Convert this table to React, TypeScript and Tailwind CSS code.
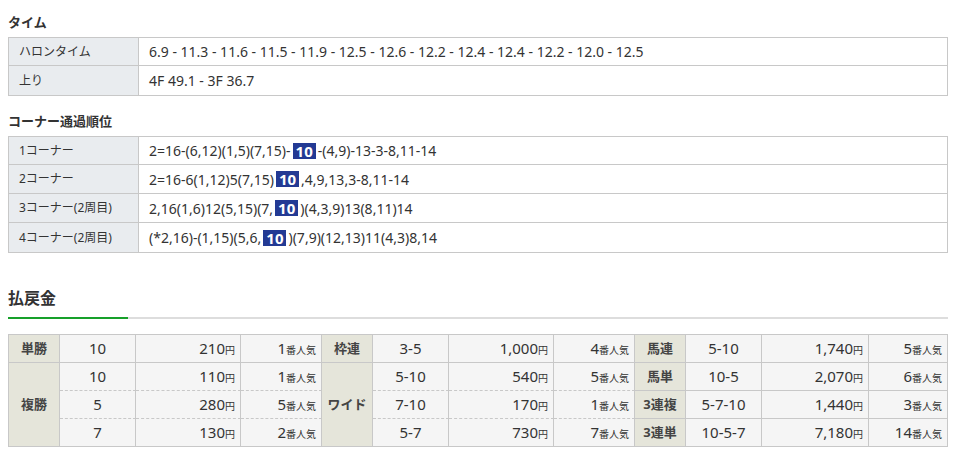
import React from 'react';

type Pay = { label: string; rows: { horse: string; yen: string; rank: string }[] };

const timeRows = [
  { label: 'ハロンタイム', value: '6.9 - 11.3 - 11.6 - 11.5 - 11.9 - 12.5 - 12.6 - 12.2 - 12.4 - 12.4 - 12.2 - 12.0 - 12.5' },
  { label: '上り', value: '4F 49.1 - 3F 36.7' },
];

const Hl = () => (
  <span className="inline-block bg-[#233a94] text-white font-bold text-[15px] leading-[16px] px-[3px] mx-[2px] align-[-1px]">10</span>
);

const cornerRows: { label: string; value: React.ReactNode }[] = [
  { label: '1コーナー', value: <>2=16-(6,12)(1,5)(7,15)-<Hl />-(4,9)-13-3-8,11-14</> },
  { label: '2コーナー', value: <>2=16-6(1,12)5(7,15) <Hl />,4,9,13,3-8,11-14</> },
  { label: '3コーナー(2周目)', value: <>2,16(1,6)12(5,15)(7,<Hl />)(4,3,9)13(8,11)14</> },
  { label: '4コーナー(2周目)', value: <>(*2,16)-(1,15)(5,6,<Hl />)(7,9)(12,13)11(4,3)8,14</> },
];

const payTables: { cols: string; groups: Pay[] }[] = [
  {
    cols: 'grid-cols-[51px_76px_105px_81px]',
    groups: [
      { label: '単勝', rows: [{ horse: '10', yen: '210', rank: '1' }] },
      {
        label: '複勝',
        rows: [
          { horse: '10', yen: '110', rank: '1' },
          { horse: '5', yen: '280', rank: '5' },
          { horse: '7', yen: '130', rank: '2' },
        ],
      },
    ],
  },
  {
    cols: 'grid-cols-[51px_76px_105px_81px]',
    groups: [
      { label: '枠連', rows: [{ horse: '3-5', yen: '1,000', rank: '4' }] },
      {
        label: 'ワイド',
        rows: [
          { horse: '5-10', yen: '540', rank: '5' },
          { horse: '7-10', yen: '170', rank: '1' },
          { horse: '5-7', yen: '730', rank: '7' },
        ],
      },
    ],
  },
  {
    cols: 'grid-cols-[51px_76px_107px_79px]',
    groups: [
      { label: '馬連', rows: [{ horse: '5-10', yen: '1,740', rank: '5' }] },
      { label: '馬単', rows: [{ horse: '10-5', yen: '2,070', rank: '6' }] },
      { label: '3連複', rows: [{ horse: '5-7-10', yen: '1,440', rank: '3' }] },
      { label: '3連単', rows: [{ horse: '10-5-7', yen: '7,180', rank: '14' }] },
    ],
  },
];

const InfoTable = ({ rows }: { rows: { label: string; value: React.ReactNode }[] }) => (
  <div className="border border-[#c8c8c8] divide-y divide-[#c8c8c8]">
    {rows.map((r) => (
      <div key={r.label} className="flex h-[29px] first:h-[28px]">
        <div className="w-[130px] shrink-0 border-r border-[#c8c8c8] bg-[#e9ecef] pl-[10px] flex items-center text-[12px]">
          {r.label}
        </div>
        <div className="flex-1 pl-[10px] flex items-center text-[14px] whitespace-nowrap">{r.value}</div>
      </div>
    ))}
  </div>
);

const PayTable = ({ cols, groups }: { cols: string; groups: Pay[] }) => (
  <div className={`grid ${cols} auto-rows-[28px]`}>
    {groups.map((g) => {
      const span = g.rows.length === 3 ? 'row-span-3' : '';
      return (
        <React.Fragment key={g.label}>
          <div className={`${span} bg-[#e5e5da] border-r border-b border-[#c8c8c8] flex items-center justify-center text-[13px] font-bold text-[#444]`}>
            {g.label}
          </div>
          {g.rows.map((r, i) => {
            const dashed = i < g.rows.length - 1 ? '[border-bottom-style:dashed]' : '';
            return (
              <React.Fragment key={i}>
                <div className={`bg-[#f5f5f5] border-r border-b border-[#c8c8c8] ${dashed} flex items-center justify-center text-[15px]`}>
                  {r.horse}
                </div>
                <div className={`bg-[#f5f5f5] border-r border-b border-[#c8c8c8] ${dashed} flex items-center justify-end pr-[5px] text-[15px]`}>
                  {r.yen}
                  <span className="text-[10px] mt-[3px]">円</span>
                </div>
                <div className={`bg-[#f5f5f5] border-r border-b border-[#c8c8c8] ${dashed} flex items-center justify-end pr-[5px] text-[15px]`}>
                  {r.rank}
                  <span className="text-[10px] mt-[3px]">番人気</span>
                </div>
              </React.Fragment>
            );
          })}
        </React.Fragment>
      );
    })}
  </div>
);

export default function App() {
  return (
    <div className="w-[960px] h-[456px] bg-white text-[#333] px-[8px] pt-[12px] font-['Noto_Sans','Noto_Sans_CJK_JP',sans-serif] overflow-hidden">
      <div className="w-[940px]">
        <h3 className="text-[13px] font-bold leading-[20px] mb-[5px]">タイム</h3>
        <InfoTable rows={timeRows} />

        <h3 className="text-[13px] font-bold leading-[20px] mt-[15px] mb-[5px]">コーナー通過順位</h3>
        <InfoTable rows={cornerRows} />

        <h2 className="text-[16px] font-bold leading-[24px] mt-[33px]">払戻金</h2>
        <div className="relative h-[2px] bg-[#dddddd] mt-[7px]">
          <div className="absolute left-0 top-0 h-full w-[120px] bg-[#17a02a]" />
        </div>

        <div className="flex mt-[15px] border-t border-l border-[#c8c8c8] w-fit">
          {payTables.map((t, i) => (
            <PayTable key={i} cols={t.cols} groups={t.groups} />
          ))}
        </div>
      </div>
    </div>
  );
}
